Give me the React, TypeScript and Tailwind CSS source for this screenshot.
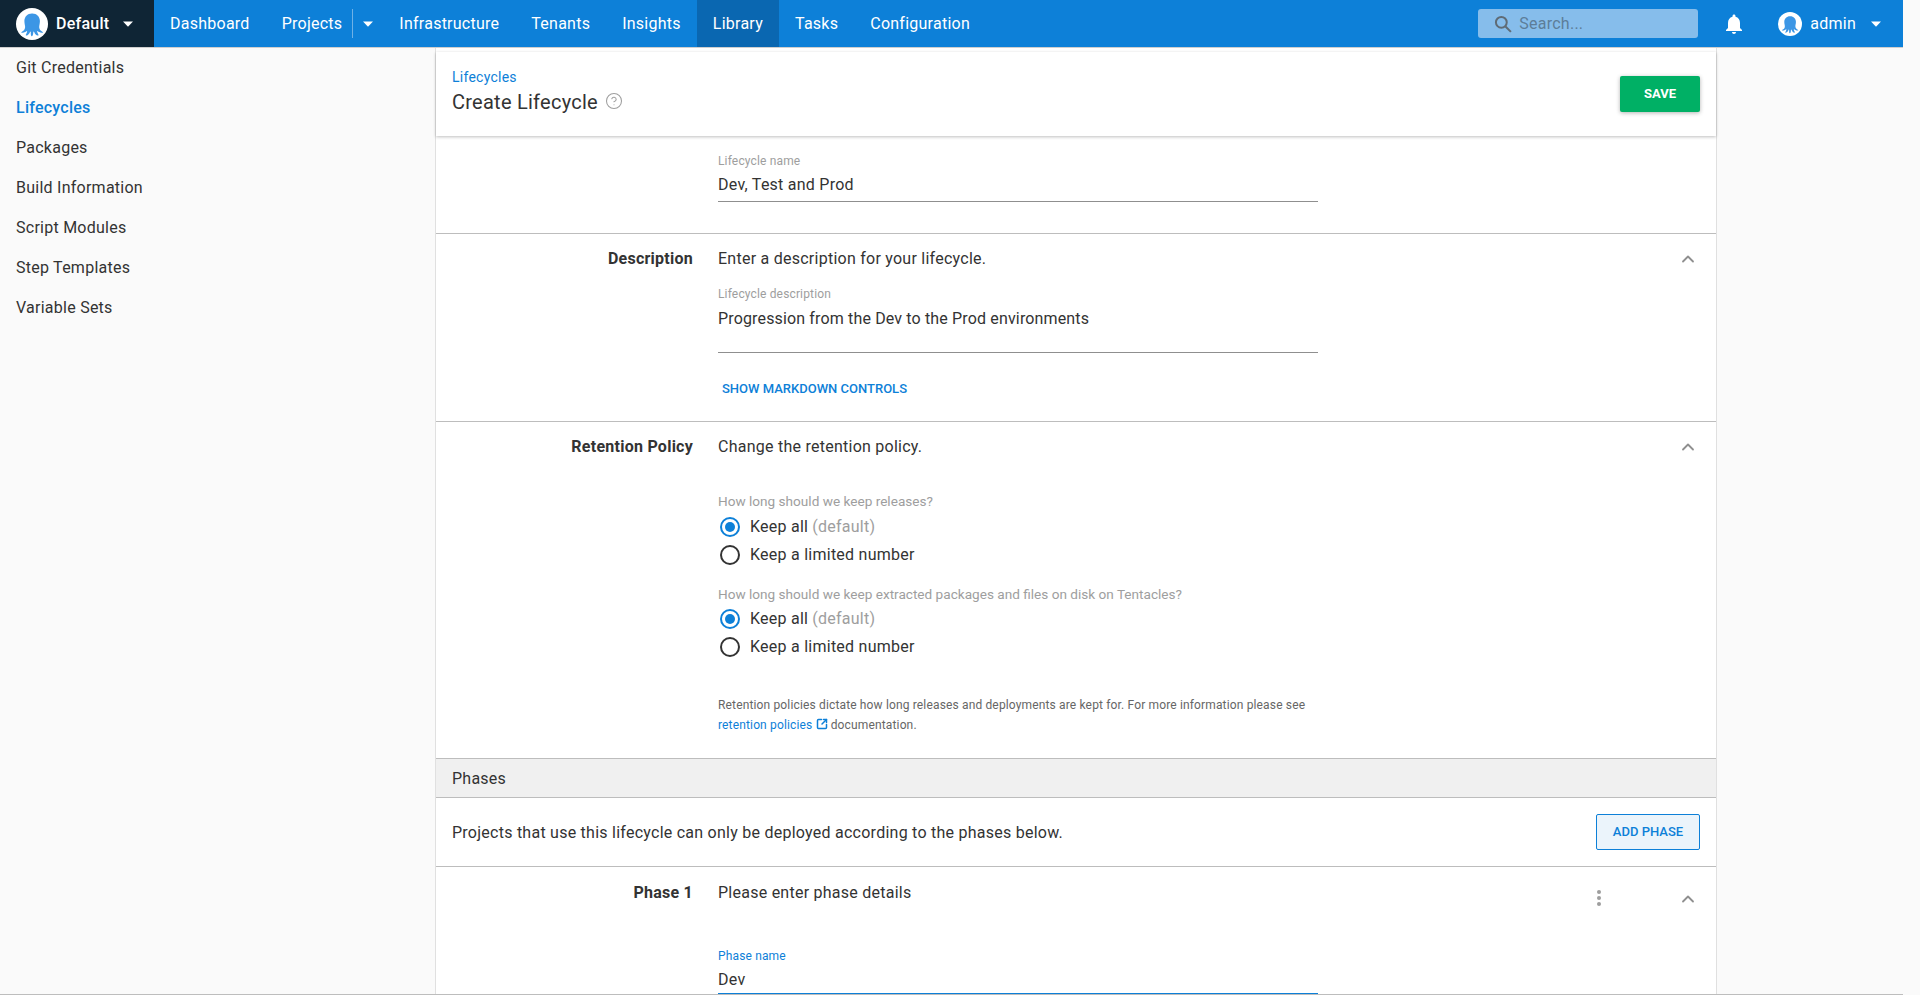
import { ChevronUp, HelpCircle, SquareArrowOutUpRight } from "lucide-react"

const navItems: string[] = ["Infrastructure", "Tenants", "Insights", "Library", "Tasks", "Configuration"]
const sideItems: string[] = ["Git Credentials", "Lifecycles", "Packages", "Build Information", "Script Modules", "Step Templates", "Variable Sets"]

const Logo = ({ size }: { size: string }) => (
    <svg viewBox="0 0 32 32" className={size}>
        <circle cx="16" cy="16" r="16" fill="#fff" />
        <path
            d="M16 5.5c-4.6 0-7.6 3.4-7.6 7.6 0 2.2.5 3.7.7 5.4.2 1.9-.6 3.4-2.1 4.6-.8.6-1.4 1-1.9 1.3.9.7 2.7.4 4-.3 1-.5 1.5-1.2 1.9-1.2.5 0-.3 2.3-.9 3.3-.4.7-.6 1 0 1.3 1.600.4 3.300-1.700 3.900-3.400.2-.5.4-.7.6-.7.3 0 .2 1.200.2 2.200 0 1.100.2 2.400.800 2.700.8.3 1.300-1 1.500-2.200.2-1.100.1-2.600.5-2.700.3 0 .5.3.7.8.6 1.600 2.300 3.700 3.900 3.300.6-.3.4-.6 0-1.300-.6-1-1.400-3.300-.9-3.300.4 0 .9.7 1.900 1.200 1.300.7 3.100 1 4 .3-.5-.3-1.100-.7-1.900-1.300-1.500-1.200-2.300-2.700-2.100-4.600.2-1.700.7-3.200.7-5.400 0-4.200-3-7.600-7.600-7.600z"
            fill="#3c96e5"
        />
    </svg>
)

const Caret = () => (
    <svg viewBox="0 0 10 6" className="w-[10px] h-[6px]">
        <path d="M0 0.500h10L5 5.800z" fill="#fff" />
    </svg>
)

const Radio = ({ checked, label, hint }: { checked?: boolean, label: string, hint?: string }) => (
    <div className="h-[28px] flex items-center pl-[2px]">
        {checked
            ? <span className="w-[20px] h-[20px] rounded-full border-2 border-[#0d80d8] flex items-center justify-center"><span className="w-[10px] h-[10px] rounded-full bg-[#0d80d8]"></span></span>
            : <span className="w-[20px] h-[20px] rounded-full border-2 border-[#333333]"></span>}
        <span className="ml-[10px] text-base text-[#333333]">{label}</span>
        {hint && <span className="ml-1 text-base text-[#9e9e9e]">{hint}</span>}
    </div>
)

const Section = ({ title, summary, height, more, summaryTop, children }: { title?: string, summary?: string, height: string, more?: boolean, summaryTop?: string, children?: React.ReactNode }) => (
    <div className={`${height} border-b border-[#bdbdbd] flex overflow-hidden`}>
        <div className={`w-[257px] ${summaryTop ?? "pt-[13px]"} text-right text-base font-bold text-[#333333] leading-[24px]`}>{title}</div>
        <div className="ml-[25px] w-[600px]">
            {summary && <div className={`${summaryTop ?? "pt-[13px]"} text-base text-[#333333] leading-[24px]`}>{summary}</div>}
            {children}
        </div>
        {summary && (
            <div className="flex-1 flex justify-end pr-[18px] pt-[15px]">
                {more && (
                    <span className="flex flex-col gap-[2px] mr-[77px] mt-[8px]">
                        <i className="w-[4px] h-[4px] rounded-full bg-[#9e9e9e]"></i>
                        <i className="w-[4px] h-[4px] rounded-full bg-[#9e9e9e]"></i>
                        <i className="w-[4px] h-[4px] rounded-full bg-[#9e9e9e]"></i>
                    </span>
                )}
                <ChevronUp className={`w-[20px] h-[20px] text-[#8f8f8f] ${more ? "mt-[7px]" : ""}`} strokeWidth={2.2} />
            </div>
        )}
    </div>
)

const App: React.FC = () => {
    return (
        <div className="w-[1920px] h-[995px] overflow-hidden bg-[#fafafa] font-['Roboto',sans-serif] tracking-[0.25px] text-[#333333]">
            <div className="w-[1903px] h-[995px] flex flex-col border-b border-[#bdbdbd]">
                <div className="h-[48px] shrink-0 flex items-stretch bg-[#0d80d8] border-b border-[#cfcfcf] text-white text-base">
                    <div className="w-[154px] bg-[#0f2535] flex items-center pl-[16px]">
                        <Logo size="w-[32px] h-[32px]" />
                        <span className="ml-[8px] font-medium">Default</span>
                        <span className="ml-[14px] flex"><Caret /></span>
                    </div>
                    <a className="px-4 flex items-center">Dashboard</a>
                    <a className="pl-4 pr-[10px] flex items-center">Projects</a>
                    <div className="flex items-center">
                        <span className="w-px h-[29px] bg-[#6fb1e6]"></span>
                        <span className="w-[30px] flex justify-center"><Caret /></span>
                    </div>
                    {navItems.map((item: string) => (
                        <a key={item} className={`px-4 flex items-center ${item === "Library" ? "bg-[#0a67b1]" : ""}`}>{item}</a>
                    ))}
                    <div className="ml-auto flex items-center">
                        <div className="w-[220px] h-[29px] rounded-[3px] bg-[#86bdeb] flex items-center pl-[15px]">
                            <svg viewBox="0 0 24 24" className="w-[20px] h-[20px]" fill="none" stroke="#5f6b75" strokeWidth="2.400">
                                <circle cx="10" cy="10" r="6.500" />
                                <path d="M15 15l6.500 6.500" />
                            </svg>
                            <span className="ml-[6px] text-[#5d7d99]">Search...</span>
                        </div>
                        <svg viewBox="0 0 24 24" className="w-[24px] h-[24px] ml-[24px]" fill="#fff">
                            <path d="M12 22c1.100 0 2-.9 2-2h-4c0 1.100.9 2 2 2zm6-6v-5c0-3.100-1.600-5.600-4.500-6.300V4c0-.8-.7-1.500-1.500-1.500s-1.500.7-1.500 1.500v.7C7.600 5.400 6 7.900 6 11v5l-2 2v1h16v-1z" />
                        </svg>
                        <div className="ml-[32px] flex items-center">
                            <Logo size="w-[24px] h-[24px]" />
                            <span className="ml-[8px]">admin</span>
                            <span className="ml-[15px] mr-[22px] flex"><Caret /></span>
                        </div>
                    </div>
                </div>
                <div className="flex-1 min-h-0 flex overflow-hidden">
                    <div className="w-[435px] shrink-0 pl-4">
                        {sideItems.map((item: string) => (
                            <div key={item} className={`h-[40px] flex items-center text-base ${item === "Lifecycles" ? "text-[#0d80d8] font-medium" : "text-[#333333]"}`}>{item}</div>
                        ))}
                    </div>
                    <div className="w-[1282px] shrink-0 bg-white border-x border-[#e0e0e0] relative">
                        <div className="mt-[4px] h-[84px] px-4 flex justify-between items-center bg-white shadow-[0_1px_3px_rgba(0,0,0,0.25)] relative">
                            <div className="-mt-[5px]">
                                <a className="block text-sm text-[#0d80d8] leading-[20px]">Lifecycles</a>
                                <div className="flex items-center mt-[1px]">
                                    <h1 className="text-[20px] leading-[28px] text-[#333333]">Create Lifecycle</h1>
                                    <HelpCircle className="w-[18px] h-[18px] ml-[7px] -mt-[2px] text-[#9e9e9e]" strokeWidth={1.400} />
                                </div>
                            </div>
                            <button className="w-[80px] h-[36px] rounded-[2px] bg-[#00b065] text-white text-[13px] font-bold uppercase tracking-normal shadow-[0_1px_4px_rgba(0,0,0,0.3)]">Save</button>
                        </div>
                        <Section height="h-[98px]">
                            <div className="pt-[17px] text-xs tracking-[0.15px] text-[#9e9e9e] leading-[16px]">Lifecycle name</div>
                            <div className="pt-[4px] pb-[4px] text-base leading-[24px] border-b border-[#8f8f8f]">Dev, Test and Prod</div>
                        </Section>
                        <Section height="h-[188px]" title="Description" summary="Enter a description for your lifecycle.">
                            <div className="pt-[15px] text-xs tracking-[0.15px] text-[#9e9e9e] leading-[16px]">Lifecycle description</div>
                            <div className="pt-[5px] pb-[21px] text-base tracking-[0.15px] leading-[24px] border-b border-[#8f8f8f]">Progression from the Dev to the Prod environments</div>
                            <div className="pt-[27px] pl-1 text-[13px] font-medium uppercase tracking-normal text-[#0d80d8] leading-[18px]">Show markdown controls</div>
                        </Section>
                        <Section height="h-[337px]" title="Retention Policy" summary="Change the retention policy.">
                            <div className="pt-[34px] text-[13.6px] tracking-normal text-[#9e9e9e] leading-[16px]">How long should we keep releases?</div>
                            <div className="pt-[4px]">
                                <Radio checked label="Keep all" hint="(default)" />
                                <Radio label="Keep a limited number" />
                            </div>
                            <div className="pt-[17px] text-[13.6px] tracking-normal text-[#9e9e9e] leading-[16px]">How long should we keep extracted packages and files on disk on Tentacles?</div>
                            <div className="pt-[3px]">
                                <Radio checked label="Keep all" hint="(default)" />
                                <Radio label="Keep a limited number" />
                            </div>
                            <p className="pt-[34px] text-xs tracking-[0.15px] text-[#666666] leading-[20px]">
                                Retention policies dictate how long releases and deployments are kept for. For more information please see <a className="text-[#0d80d8]">retention policies <SquareArrowOutUpRight className="inline w-[12px] h-[12px] align-[-1px]" strokeWidth={3} /></a> documentation.
                            </p>
                        </Section>
                        <div className="h-[39px] pl-4 pt-[2px] flex items-center bg-[#f0f0f0] border-b border-[#bdbdbd] text-base">Phases</div>
                        <div className="h-[69px] px-4 flex justify-between items-center border-b border-[#bdbdbd] text-base">
                            <span className="pt-[2px]">Projects that use this lifecycle can only be deployed according to the phases below.</span>
                            <button className="w-[104px] h-[36px] rounded-[2px] border border-[#0d80d8] bg-[#ebf4fb] text-[#0d80d8] text-[13px] font-medium uppercase tracking-normal">Add phase</button>
                        </div>
                        <Section height="h-[200px]" title="Phase 1" summary="Please enter phase details" summaryTop="pt-[14px]" more>
                            <div className="pt-[43px] text-xs tracking-[0.15px] text-[#0d80d8] leading-[16px]">Phase name</div>
                            <div className="pt-[4px] pb-[1px] text-base leading-[24px] border-b-2 border-[#0d80d8]">Dev</div>
                        </Section>
                    </div>
                </div>
            </div>
        </div>
    )
}
export default App
